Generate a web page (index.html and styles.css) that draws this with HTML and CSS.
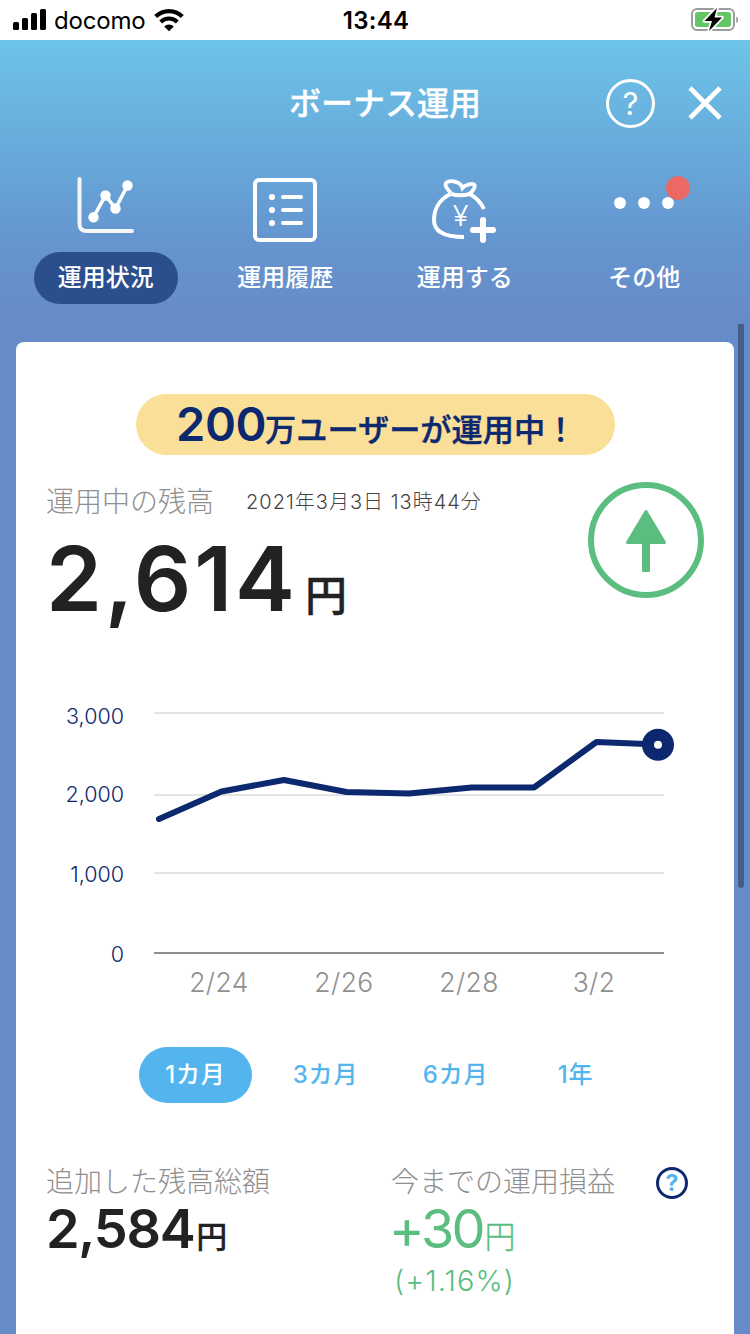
FILE: index.html
```html
<!DOCTYPE html>
<html lang="ja">
<head>
    <meta charset="UTF-8">
    <meta name="viewport" content="width=device-width, initial-scale=1.0">
    <title>ボーナス運用</title>
    <link rel="stylesheet" href="styles.css">
</head>
<body>
    <div class="status-bar">
        <div class="carrier">
            <svg width="34" height="22" viewBox="0 0 34 22">
                <rect x="0" y="13" width="6" height="8" rx="1.5"/>
                <rect x="9" y="9" width="6" height="12" rx="1.5"/>
                <rect x="18" y="4" width="6" height="17" rx="1.5"/>
                <rect x="27" y="0" width="6" height="21" rx="1.5"/>
            </svg>
            <span class="carrier-name">docomo</span>
            <svg class="wifi" width="30" height="23" viewBox="0 0 30 23">
                <path d="M1.7 7.6a18.9 18.9 0 0 1 26.6 0" fill="none" stroke="#000" stroke-width="4.2"/>
                <path d="M6.7 13a11.8 11.8 0 0 1 16.6 0" fill="none" stroke="#000" stroke-width="4"/>
                <path d="M15 22.2l-4.8-4.7a6.9 6.9 0 0 1 9.6 0z"/>
            </svg>
        </div>
        <div class="time">13:44</div>
        <div class="battery">
            <svg width="48" height="26" viewBox="0 0 48 26">
                <rect x="1" y="2" width="42" height="21" rx="5" fill="none" stroke="#9c9c9c" stroke-width="2"/>
                <path d="M45.2 9.5c2.6 1 2.6 5.5 0 6.5z" fill="#9c9c9c"/>
                <rect x="4" y="5" width="36" height="15" rx="3" fill="#63c665"/>
                <path d="M26 1L13.5 14h7.5l-3 10L31 10.5h-7.5z" fill="#000" stroke="#fff" stroke-width="3.5" paint-order="stroke" stroke-linejoin="round"/>
            </svg>
        </div>
    </div>

    <div class="app">
        <header class="header">
            <h1 class="title">ボーナス運用</h1>
            <button class="icon-btn help">?</button>
            <button class="icon-btn close">
                <svg width="34" height="34" viewBox="0 0 34 34">
                    <path d="M2 2l30 30M32 2L2 32" fill="none" stroke="#fff" stroke-width="4.6"/>
                </svg>
            </button>
        </header>

        <nav class="tabs">
            <a class="tab active">
                <svg width="72" height="72" viewBox="0 0 72 72">
                    <path d="M9.5 5v44.5q0 7.5 7.5 7.5h45" fill="none" stroke="#f5f6f8" stroke-width="4" stroke-linecap="round"/>
                    <path d="M23.5 43.2L35.5 21.5l10 13L57.5 11.5" fill="none" stroke="#fff" stroke-width="3.6"/>
                    <g fill="#fff">
                        <circle cx="23.5" cy="43.2" r="5.2"/>
                        <circle cx="35.5" cy="21.5" r="5.2"/>
                        <circle cx="45.5" cy="34.5" r="5.2"/>
                        <circle cx="57.5" cy="11.5" r="5.2"/>
                    </g>
                </svg>
                <span class="tab-label">運用状況</span>
            </a>
            <a class="tab">
                <svg width="72" height="72" viewBox="0 0 72 72">
                    <rect x="6" y="6" width="60" height="60" rx="4" fill="none" stroke="#fff" stroke-width="4"/>
                    <g fill="#fff">
                        <circle cx="23" cy="23" r="3.1"/>
                        <circle cx="23" cy="36" r="3.1"/>
                        <circle cx="23" cy="49" r="3.1"/>
                    </g>
                    <path d="M34 23h18M34 36h18M34 49h18" fill="none" stroke="#fff" stroke-width="4" stroke-linecap="round"/>
                </svg>
                <span class="tab-label">運用履歴</span>
            </a>
            <a class="tab">
                <svg width="72" height="72" viewBox="1 0 72 72" overflow="visible">
                    <g fill="none" stroke="#fff" stroke-width="4">
                        <path d="M22.5 20C10 26 6 37 6 46C6 59 18 63 36 63"/>
                        <path d="M42 20C48 23.5 53 28.5 56 35"/>
                        <path d="M23 20Q32 22.5 42 20"/>
                        <path d="M23 19C19 15 16 11 18.5 8.5C23 5.5 33 8 34.5 14C37 11 45 8.5 46.5 11C47.5 14 44 18 41 20" stroke-width="3.8"/>
                    </g>
                    <text class="yen" x="32.5" y="52" text-anchor="middle">¥</text>
                    <path d="M55 46v20M45 56h20" fill="none" stroke="#fff" stroke-width="6" stroke-linecap="round"/>
                </svg>
                <span class="tab-label">運用する</span>
            </a>
            <a class="tab">
                <svg width="72" height="72" viewBox="0 0 72 72" overflow="visible">
                    <g fill="#fff">
                        <circle cx="12" cy="29" r="6"/>
                        <circle cx="36" cy="29" r="6"/>
                        <circle cx="60" cy="29" r="6"/>
                    </g>
                    <circle cx="70" cy="14" r="12" fill="#ea6965"/>
                </svg>
                <span class="tab-label">その他</span>
            </a>
        </nav>

        <main class="card">
            <div class="banner"><span class="banner-num">200</span><span class="banner-text">万ユーザーが運用中！</span></div>

            <section class="balance">
                <div class="balance-info">
                    <div class="balance-head">
                        <span class="label">運用中の残高</span>
                        <span class="date">2021年3月3日 13時44分</span>
                    </div>
                    <div class="balance-value"><span class="num">2,614</span><span class="unit">円</span></div>
                </div>
                <svg class="arrow" width="116" height="116" viewBox="0 0 116 116">
                    <circle cx="58" cy="58" r="55" fill="none" stroke="#5bbd80" stroke-width="6"/>
                    <path d="M58 29.5L76.5 60.5h-37z" fill="#5bbd80" stroke="#5bbd80" stroke-width="3" stroke-linejoin="round"/>
                    <rect x="54" y="58" width="8" height="32" rx="1.5" fill="#5bbd80"/>
                </svg>
            </section>

            <svg class="chart" width="640" height="320" viewBox="46 690 640 320">
                <path class="grid" d="M154 713h510M154 795h510M154 873h510"/>
                <path class="axis" d="M154 953h510"/>
                <g class="y-labels">
                    <text x="124" y="724">3,000</text>
                    <text x="124" y="802">2,000</text>
                    <text x="124" y="882">1,000</text>
                    <text x="124" y="962">0</text>
                </g>
                <g class="x-labels">
                    <text x="219" y="992">2/24</text>
                    <text x="344" y="992">2/26</text>
                    <text x="469" y="992">2/28</text>
                    <text x="594" y="992">3/2</text>
                </g>
                <polyline class="line" points="159,819 221.5,791.5 284,780 346.5,792 409,793.5 471.5,787.5 534,787.5 596.5,742 658,744.5"/>
                <circle cx="658" cy="744.7" r="10" fill="#fff" stroke="#0c286e" stroke-width="12"/>
            </svg>

            <div class="periods">
                <button class="period selected">1カ月</button>
                <button class="period">3カ月</button>
                <button class="period">6カ月</button>
                <button class="period year">1年</button>
            </div>

            <section class="summary">
                <div class="summary-item">
                    <div class="label">追加した残高総額</div>
                    <div class="amount"><span class="num">2,584</span><span class="unit">円</span></div>
                </div>
                <div class="summary-item profit">
                    <div class="label">今までの運用損益<span class="hint">?</span></div>
                    <div class="amount"><span class="num">+30</span><span class="unit">円</span></div>
                    <div class="rate">(+1.16%)</div>
                </div>
            </section>
        </main>
        <div class="scrollbar"></div>
    </div>
</body>
</html>
```

FILE: styles.css
```css
* {
    box-sizing: border-box;
}

body {
    margin: 0;
    width: 750px;
    height: 1334px;
    overflow: hidden;
    background-color: #fff;
    color: #222;
    font-family: Inter, "Noto Sans CJK JP", sans-serif;
}

button {
    border: none;
    padding: 0;
    background: none;
    font-family: inherit;
}

svg {
    display: block;
    flex: none;
}

.status-bar {
    display: grid;
    grid-template-columns: 1fr auto 1fr;
    align-items: center;
    height: 40px;
    padding: 0 11px 0 13px;
    color: #000;
}

.carrier {
    display: flex;
    align-items: center;
}

.carrier-name {
    margin: 2px 9px 0 7px;
    font-size: 24px;
    line-height: 36px;
    letter-spacing: -0.2px;
}

.time {
    padding-top: 2px;
    font-size: 24px;
    font-weight: 600;
    line-height: 38px;
    letter-spacing: 0.3px;
}

.battery {
    justify-self: end;
}

.app {
    position: relative;
    height: 1294px;
    background: linear-gradient(#6dc4e8 0, #67a8da 120px, #6595cf 200px, #668bc9 284px);
    overflow: hidden;
}

.header {
    display: flex;
    align-items: center;
    height: 126px;
    padding: 0 28px 0 289px;
    color: #fff;
}

.title {
    flex: 1;
    margin: 0;
    padding-top: 2px;
    font-size: 32px;
    font-weight: 500;
    line-height: 46px;
    -webkit-text-stroke: 0.3px #fff;
}

.help {
    width: 49px;
    height: 49px;
    margin-right: 33px;
    border: 3.5px solid #fff;
    border-radius: 50%;
    color: #fff;
    font-size: 31px;
    line-height: 43px;
}

.tabs {
    display: flex;
    height: 176px;
    padding: 8px 16px 0;
}

.tab {
    flex: 1;
    display: flex;
    flex-direction: column;
    align-items: center;
    color: #fff;
}

.tab-label {
    width: 144px;
    height: 52px;
    margin-top: 6px;
    border-radius: 26px;
    font-size: 24px;
    font-weight: 500;
    line-height: 52px;
    text-align: center;
}

.tab.active .tab-label {
    background-color: #2b4e8d;
}

.yen {
    font-size: 29px;
    font-weight: 300;
    fill: #fff;
}

.card {
    height: 1000px;
    margin: 0 16px;
    padding: 52px 30px 0;
    border-radius: 8px;
    background-color: #fff;
}

.banner {
    display: flex;
    align-items: baseline;
    width: 479px;
    height: 61px;
    margin-left: 90px;
    padding-left: 40px;
    border-radius: 31px;
    background-color: #fadf98;
    color: #0c286e;
    line-height: 60px;
    white-space: nowrap;
}

.banner-num {
    width: 89px;
    font-size: 47px;
    font-weight: 600;
    letter-spacing: -0.4px;
}

.banner-text {
    font-size: 31.2px;
    font-weight: 500;
    -webkit-text-stroke: 0.4px #0c286e;
}

.balance {
    display: flex;
    justify-content: space-between;
    height: 235px;
    padding-top: 27px;
}

.balance-head {
    display: flex;
    align-items: center;
    height: 36px;
}

.label {
    color: #8f8f8f;
    font-size: 28px;
    font-weight: 300;
    line-height: 36px;
}

.balance-head .label {
    padding-top: 3px;
}

.date {
    margin-left: 32px;
    color: #444;
    font-size: 20px;
    font-weight: 300;
    letter-spacing: 1px;
}

.balance-value {
    display: flex;
    align-items: baseline;
    line-height: 122px;
}

.balance-value .num {
    width: 248px;
    font-size: 90px;
    font-weight: 600;
    letter-spacing: 2.8px;
}

.balance-value .unit {
    margin-left: 11px;
    font-size: 42px;
    font-weight: 500;
    -webkit-text-stroke: 0.4px #222;
}

.grid {
    stroke: #e4e4e4;
    stroke-width: 2;
}

.axis {
    stroke: #8e8e8e;
    stroke-width: 2;
}

.y-labels {
    fill: #0c286e;
    font-size: 21.5px;
    font-weight: 300;
    text-anchor: end;
}

.x-labels {
    fill: #8f8f8f;
    font-size: 26.5px;
    font-weight: 300;
    letter-spacing: 0.4px;
    text-anchor: middle;
}

.line {
    fill: none;
    stroke: #0c286e;
    stroke-width: 6;
    stroke-linecap: round;
    stroke-linejoin: bevel;
}

.periods {
    display: flex;
    gap: 17px;
    margin: 37px 0 0 93px;
}

.period {
    width: 113px;
    height: 56px;
    border-radius: 28px;
    color: #54b5ee;
    font-size: 24px;
    font-weight: 500;
    line-height: 54px;
    letter-spacing: 0.8px;
}

.period.selected {
    background-color: #54b5ee;
    color: #fff;
}

.period.year {
    width: 93px;
}

.summary {
    display: flex;
    margin-top: 60px;
}

.summary-item {
    flex: none;
    width: 345px;
}

.summary .label {
    display: flex;
    align-items: center;
    height: 36px;
    padding-top: 1px;
    white-space: nowrap;
}

.amount {
    display: flex;
    align-items: baseline;
    line-height: 60px;
}

.amount .num {
    font-size: 54px;
    font-weight: 600;
    letter-spacing: -1.3px;
}

.amount .unit {
    margin-left: 2px;
    font-size: 31px;
    font-weight: 500;
    -webkit-text-stroke: 0.3px currentColor;
}

.profit {
    color: #5bbd80;
}

.profit .amount {
    margin-left: -2px;
}

.profit .num {
    font-weight: 400;
    letter-spacing: -3px;
}

.profit .unit {
    font-weight: 300;
}

.hint {
    width: 32px;
    height: 32px;
    margin: 3px 0 0 41px;
    border: 3px solid #0c286e;
    border-radius: 50%;
    color: #54b5ee;
    font-size: 23px;
    font-weight: 700;
    line-height: 27px;
    text-align: center;
}

.rate {
    padding-left: 3px;
    font-size: 29px;
    font-weight: 300;
    line-height: 28px;
    letter-spacing: 1.1px;
}

.scrollbar {
    position: absolute;
    top: 284px;
    right: 6px;
    width: 6px;
    height: 564px;
    border-radius: 0 0 3px 3px;
    background-color: #435d87;
}
```
